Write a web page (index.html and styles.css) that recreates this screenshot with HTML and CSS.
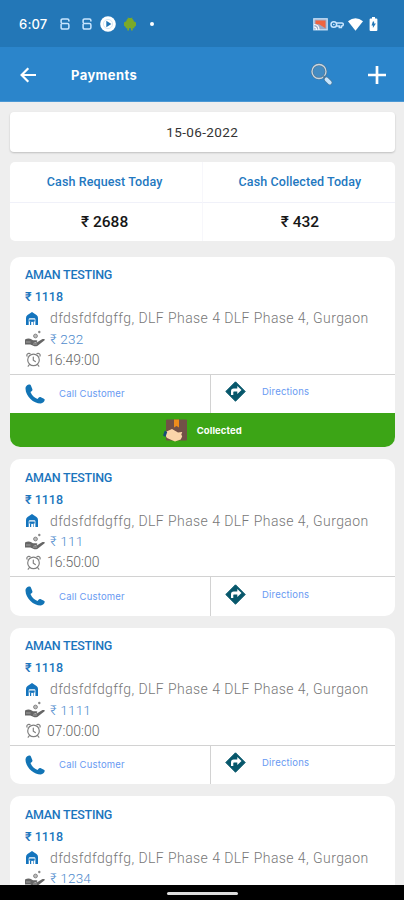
FILE: index.html
```html
<!DOCTYPE html>
<html lang="en">
<head>
<meta charset="utf-8">
<title>Payments</title>
<link rel="stylesheet" href="styles.css">
</head>
<body>
<svg class="defs" width="0" height="0">
  <symbol id="home" viewBox="0 0 12 13"><path fill="#1474bd" fill-rule="evenodd" d="M6 0 10.500 3Q12 4 12 6V13H0V6Q0 4 1.500 3ZM2.700 13H4V9.200H8V13H9.400V7.300Q9.400 6.200 8.300 6.200H3.800Q2.700 6.200 2.700 7.300Z"/><path fill="#1474bd" d="M3.300 7.400h5.400v2H3.300z"/><path fill="#fff" d="M5.200 10h2.200v3H5.200z"/></symbol>
  <symbol id="hand" viewBox="0 0 20 17"><path fill="#666" d="M0 9.600C2 8.200 4.600 8 6.300 9.300L8 10.200h3.300c1.500.2 1.400 1.500.2 1.800H8.200c2 .8 4.200.6 5.500-.7l3.800-2.200c1.600-.6 2.900.1 2.100 1.100l-5.400 4.200c-1.600 1.700-3.600 2.300-5.400 1.700L5.300 14.500 0 14.600Z"/><path d="M1 12h4.500M8 14h4" stroke="#bbb" stroke-width=".7"/><circle cx="10.500" cy="6" r="1.900" fill="#bbb" stroke="#888" stroke-width="1"/><circle cx="14.300" cy="2" r="1.200" fill="#888"/></symbol>
  <symbol id="clock" viewBox="0 0 15 15"><g fill="none" stroke="#808080" stroke-width="1.200" stroke-linecap="round"><circle cx="7.500" cy="7.900" r="5.800"/><path d="M7.300 5v3.200l2 1.400M3.500 12.500l-1.300 1.700M11.500 12.500l1.300 1.700M1 4.100C.4 2.300 2 .8 4 1.600M14 4.100c.6-1.800-1-3.300-3-2.500"/></g></symbol>
  <symbol id="phone" viewBox="0 0 20 20"><path fill="#1274b5" d="M4.700.6C3.500.3.4 1.700.5 4.700.8 12.500 8.500 19.500 15.700 19.500c2.200 0 3.700-1.700 4-3.400.1-.7-.2-1.100-.8-1.400l-3.500-1.600c-.6-.3-1.200-.1-1.600.4l-1.300 1.600C9.200 13.800 6.700 11 5.500 8l1.400-1.100c.5-.4.7-1 .5-1.600L5.900 1.500C5.700 1 5.300.7 4.700.6Z"/></symbol>
  <symbol id="turn" viewBox="0 0 21 21"><path fill="#07576b" stroke="#07576b" stroke-linejoin="round" d="M10.500.8 20.200 10.500 10.500 20.200.8 10.500Z"/><path fill="#fff" d="M6 14V10.300Q6 7.600 8.700 7.600h3.600V5l4.200 4.100-4.200 4v-2.700H9q-.7 0-.7.700V14Z"/></symbol>
  <symbol id="sim" viewBox="0 0 10 12"><path fill="none" stroke="#c9e6ff" stroke-width="1.500" d="M8.900 3.500V2.500Q8.900 1 7.400 1H2.600Q1.100 1 1.100 2.500V4.300Q1.100 5.600 2.600 5.600H7.400Q8.900 5.600 8.900 7.100V9.500Q8.900 11 7.400 11H2.600Q1.100 11 1.100 9.500V6"/></symbol>
</svg>
<div class="screen">
  <header>
    <div class="status">
      <span class="time">6:07</span>
      <svg class="sim1" width="10" height="12"><use href="#sim"/></svg>
      <svg class="sim2" width="10" height="12"><use href="#sim"/></svg>
      <svg class="play" width="16" height="16" viewBox="0 0 16 16"><circle cx="8" cy="8" r="7.800" fill="#fff"/><circle cx="8" cy="8" r="4.600" fill="none" stroke="#b8d6ed" stroke-width=".6"/><path fill="#1f74b5" d="M6.300 4.800 11.400 8l-5.100 3.200Z"/></svg>
      <svg class="droid" width="12" height="14" viewBox="0 0 12 14"><path fill="#7ba928" d="M2.200 4.300Q2.600 2.300 4 1.500L3.500.3 4.800 1h2.400L8.500.3 8 1.500q1.400.8 1.800 2.800L12 5.500v3.300L10.300 10v1.300H8.700V13.500H7v-2.200H5v2.200H3.300v-2.200H1.700V10L0 8.800V5.500Z"/></svg>
      <i class="dot"></i>
      <svg class="cast" width="15" height="13" viewBox="0 0 15 13"><rect x=".8" y=".8" width="13.400" height="11" fill="#9aa9c8" stroke="#c8dff6" stroke-width="1.300"/><path fill="#ef6440" d="M2.500 2.500h10v7.800L6 6.200H2.500Z"/><path fill="none" stroke="#fff" stroke-width="1.200" d="M1 6.500q5 0 5 5.500M1 9q2.500 0 2.500 3"/></svg>
      <svg class="key" width="14" height="9" viewBox="0 0 14 9"><g fill="none" stroke="#c9e6ff" stroke-width="1.500"><circle cx="3.800" cy="4.500" r="2.800"/><path d="M6.500 3H12q1.300 0 1.300 1.400T12 5.900h-.6V7.600H9.300V6H6.500"/></g><circle cx="3.800" cy="4.500" r=".8" fill="#c9e6ff"/></svg>
      <svg class="wifi" width="15" height="13" viewBox="0 0 15 13"><path fill="#fff" d="M0 3.200Q7.500-2.500 15 3.200L7.500 12.800Z"/></svg>
      <svg class="battery" width="9" height="14" viewBox="0 0 9 14"><path fill="#fff" d="M3 0h3v1.500h1.400q1 0 1 1V13q0 1-1 1H1.600q-1 0-1-1V2.500q0-1 1-1H3Z"/><path fill="#2377b7" d="M3.900 4.600h1.200v2h1.800L3.900 11V8.600H2.500Z"/></svg>
    </div>
    <div class="appbar">
      <svg class="back" width="17" height="16" viewBox="0 0 17 16"><path fill="none" stroke="#fff" stroke-width="2.200" d="M16 8H2M8.300 1.200 1.600 8l6.700 6.800"/></svg>
      <h1>Payments</h1>
      <svg class="search" width="23" height="23" viewBox="0 0 23 23"><circle cx="9" cy="8.500" r="7" fill="#438bc2" stroke="#50748f" stroke-width="2.400"/><circle cx="9" cy="8.500" r="7" fill="none" stroke="#c9d6e0" stroke-width="1.300"/><path stroke="#4c7594" stroke-width="2" d="m13.500 13.300 3 3"/><path stroke="#50748f" stroke-width="5" stroke-linecap="round" d="m16.500 16.300 3.300 3.300"/><path stroke="#c5e5ff" stroke-width="3.800" stroke-linecap="round" d="m16.500 16.300 3.300 3.300"/></svg>
      <svg class="plus" width="18" height="18" viewBox="0 0 18 18"><path stroke="#fff" stroke-width="2.700" d="M9 0v18M0 9h18"/></svg>
    </div>
  </header>
  <main>
    <div class="date">15-06-2022</div>
    <section class="summary">
      <div class="label">Cash Request Today</div><div class="label">Cash Collected Today</div>
      <div class="value">₹ 2688</div><div class="value">₹ 432</div>
    </section>

    <article class="card">
      <div class="info">
        <div class="name">AMAN TESTING</div><div class="price">₹ 1118</div>
        <div class="row addr"><svg width="12" height="13"><use href="#home"/></svg><span>dfdsfdfdgffg, DLF Phase 4 DLF Phase 4, Gurgaon</span></div>
        <div class="row cash"><svg width="20" height="17"><use href="#hand"/></svg><span>₹ 232</span></div>
        <div class="row when"><svg width="15" height="15"><use href="#clock"/></svg><span>16:49:00</span></div>
      </div>
      <div class="actions"><a class="call"><svg width="20" height="20"><use href="#phone"/></svg><span>Call Customer</span></a><a class="go"><svg width="21" height="21"><use href="#turn"/></svg><span>Directions</span></a></div>
      <div class="collected"><svg width="25" height="23" viewBox="0 0 25 23"><rect x="3" y=".5" width="21" height="21" rx="1" fill="#725047"/><path fill="#ef8c1c" d="M11 .5h5v8l-2.500-1.500L11 8.500Z"/><path fill="#fbd5a9" d="M3.500 12.500 9 10l6 3.500 4-.5q.7 1.200-.8 2l1 2.500-1.500 3L12 22.500 4 19 1.500 15Z"/><path fill="#174c76" d="M1.800 11.500 4.200 13l-1.700 5L0 16.500Z"/></svg><span>Collected</span></div>
    </article>

    <article class="card">
      <div class="info">
        <div class="name">AMAN TESTING</div><div class="price">₹ 1118</div>
        <div class="row addr"><svg width="12" height="13"><use href="#home"/></svg><span>dfdsfdfdgffg, DLF Phase 4 DLF Phase 4, Gurgaon</span></div>
        <div class="row cash"><svg width="20" height="17"><use href="#hand"/></svg><span>₹ 111</span></div>
        <div class="row when"><svg width="15" height="15"><use href="#clock"/></svg><span>16:50:00</span></div>
      </div>
      <div class="actions"><a class="call"><svg width="20" height="20"><use href="#phone"/></svg><span>Call Customer</span></a><a class="go"><svg width="21" height="21"><use href="#turn"/></svg><span>Directions</span></a></div>
    </article>

    <article class="card">
      <div class="info">
        <div class="name">AMAN TESTING</div><div class="price">₹ 1118</div>
        <div class="row addr"><svg width="12" height="13"><use href="#home"/></svg><span>dfdsfdfdgffg, DLF Phase 4 DLF Phase 4, Gurgaon</span></div>
        <div class="row cash"><svg width="20" height="17"><use href="#hand"/></svg><span>₹ 1111</span></div>
        <div class="row when"><svg width="15" height="15"><use href="#clock"/></svg><span>07:00:00</span></div>
      </div>
      <div class="actions"><a class="call"><svg width="20" height="20"><use href="#phone"/></svg><span>Call Customer</span></a><a class="go"><svg width="21" height="21"><use href="#turn"/></svg><span>Directions</span></a></div>
    </article>

    <article class="card">
      <div class="info">
        <div class="name">AMAN TESTING</div><div class="price">₹ 1118</div>
        <div class="row addr"><svg width="12" height="13"><use href="#home"/></svg><span>dfdsfdfdgffg, DLF Phase 4 DLF Phase 4, Gurgaon</span></div>
        <div class="row cash"><svg width="20" height="17"><use href="#hand"/></svg><span>₹ 1234</span></div>
      </div>
    </article>
  </main>
  <footer><i></i></footer>
</div>
</body>
</html>
```

FILE: styles.css
```css
* { box-sizing: border-box; }
body { margin: 0; background: #eee; font-family: Roboto, "Noto Sans", sans-serif; }
.defs { display: block; height: 0; }
svg { flex: none; display: block; }
.screen { width: 404px; height: 900px; display: flex; flex-direction: column; overflow: hidden; }
header { flex: none; color: #fff; }
.status { height: 47px; background: #2377b7; display: flex; align-items: center; padding: 1px 26px 0 19px; }
.time { width: 41px; font: 500 13px Inter, sans-serif; letter-spacing: .2px; }
.sim2 { margin-left: 12px; }
.play { margin-left: 8px; }
.droid { margin-left: 8px; }
.dot { width: 4px; height: 4px; border-radius: 50%; background: #fff; margin-left: 14px; }
.cast { margin-left: auto; }
.key { margin-left: 2px; }
.wifi { margin-left: 4px; }
.battery { margin-left: 6px; }
.appbar { height: 55px; background: #2b85cb; border-bottom: 1px solid #4b98d4; display: flex; align-items: center; padding: 1px 18px 0 20px; }
h1 { margin: 0 0 0 34px; font: 700 13px Inter, sans-serif; letter-spacing: .4px; }
.search { margin-left: auto; }
.plus { margin-left: 35px; }
main { flex: 1; min-height: 0; overflow: hidden; padding: 10px 9.500px 0 10px; }
.date { height: 39.500px; background: #fff; border-radius: 4px; box-shadow: 0 1px 2px #0003; display: flex; align-items: center; justify-content: center; font-size: 13.500px; letter-spacing: .4px; color: #333; }
.summary { margin-top: 10px; height: 79px; background: #fff; border-radius: 5px; display: grid; grid-template-columns: 1fr 1fr; grid-template-rows: 41px 38px; }
.summary div { display: flex; align-items: center; justify-content: center; padding-right: 3px; }
.summary div:nth-child(even) { border-left: 1px solid #f7f7fb; padding: 0 0 0 2px; }
.label { border-bottom: 1px solid #f0f1f9; color: #2378bf; font-weight: 500; font-size: 12.500px; letter-spacing: .1px; }
.value { font-weight: 500; font-size: 15.500px; color: #161616; }
.card { margin-top: 12px; background: #fff; border-radius: 10px; overflow: hidden; }
.summary + .card { margin-top: 16px; }
.info { height: 117px; padding: 7.500px 15px 0; }
.name, .price { height: 22px; line-height: 21px; font-weight: 500; font-size: 12.500px; letter-spacing: -.25px; color: #1b75bd; }
.price { letter-spacing: 0; }
.row { display: flex; align-items: center; height: 21px; color: #777; }
.addr { font-weight: 300; font-size: 14px; letter-spacing: .43px; padding-left: 1px; height: 20px; color: #777; }
.addr span { margin-left: 12px; white-space: nowrap; }
.cash { font-weight: 300; font-size: 13.500px; letter-spacing: .2px; color: #4f8bcd; }
.cash span { margin-left: 5px; }
.when { font-size: 14px; font-weight: 300; color: #666; }
.when svg { margin-left: 1px; }
.when span { margin-left: 6px; }
.actions { height: 39.500px; border-top: 1.500px solid #d2d2d2; display: flex; font: 9.500px Inter, sans-serif; letter-spacing: .2px; color: #689af2; }
.actions a { display: flex; align-items: center; }
.call { width: 201px; padding-left: 15px; border-right: 1.500px solid #d2d2d2; }
.call span { margin-left: 14px; }
.go { padding: 0 0 4px 14px; }
.go span { margin-left: 16px; }
.collected { height: 34px; background: #3ca516; display: flex; align-items: center; justify-content: center; gap: 9px; color: #fff; font: 700 9.500px Inter, sans-serif; letter-spacing: .1px; }
footer { flex: none; height: 15.500px; background: #000; display: flex; align-items: center; justify-content: center; }
footer i { width: 71px; height: 3px; border-radius: 2px; background: #ddd; margin-top: 3px; }
```
